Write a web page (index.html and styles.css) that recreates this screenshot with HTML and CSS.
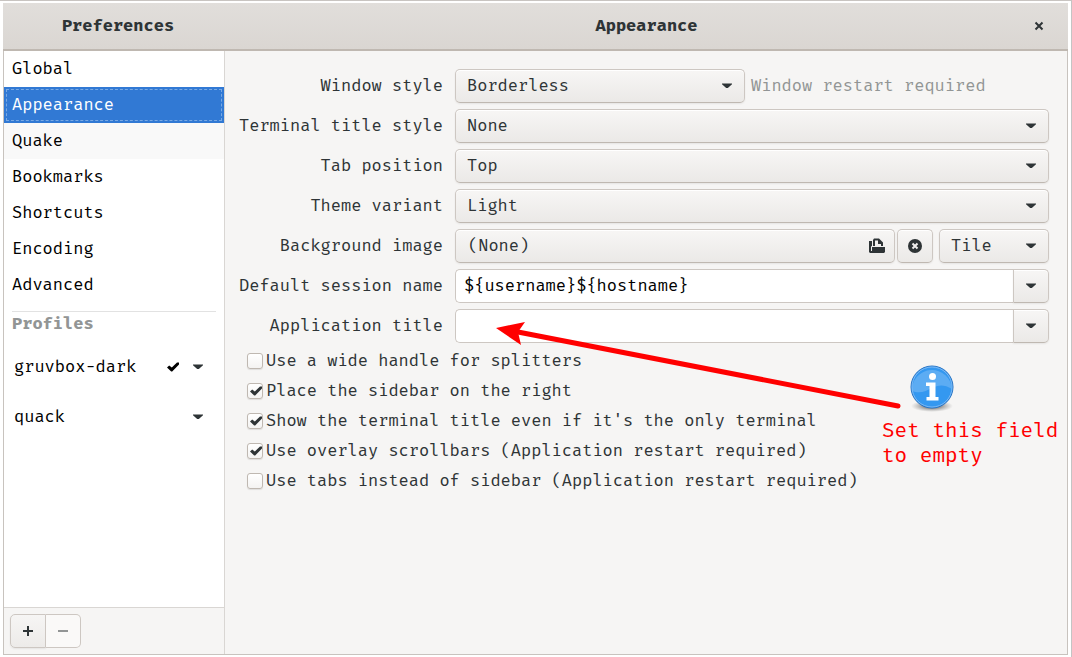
FILE: index.html
```html
<!DOCTYPE html>
<html lang="en">
<head>
<meta charset="utf-8">
<title>Preferences</title>
<link rel="stylesheet" href="styles.css">
</head>
<body>
<svg class="symbols" aria-hidden="true">
  <symbol id="caret" viewBox="0 0 10 6"><path d="M0 0.5H10V1.2L5.8 5H4.2L0 1.2Z"/></symbol>
  <symbol id="tick" viewBox="0 0 12 10"><path d="M0 5.500L2.200 3.500L4.800 5.600L10 0.500H12V2.500L5.200 9.500H4.200Z"/></symbol>
</svg>
<div class="window">
  <header class="titlebar">
    <h1 class="title title-side">Preferences</h1>
    <h2 class="title title-main">Appearance</h2>
    <button class="close" aria-label="Close"><svg width="10" height="10" viewBox="0 0 10 10"><path d="M1.500 1.500L8.500 8.500M8.500 1.500L1.500 8.500"/></svg></button>
  </header>
  <div class="body">
    <aside class="sidebar">
      <nav class="pages">
        <a class="page" href="#">Global</a>
        <a class="page selected" href="#" aria-current="page">Appearance</a>
        <a class="page hovered" href="#">Quake</a>
        <a class="page" href="#">Bookmarks</a>
        <a class="page" href="#">Shortcuts</a>
        <a class="page" href="#">Encoding</a>
        <a class="page" href="#">Advanced</a>
      </nav>
      <section class="profiles">
        <h3 class="profiles-title">Profiles</h3>
        <div class="profile"><span class="profile-name">gruvbox-dark</span><svg class="tick" width="12" height="10"><use href="#tick"/></svg><button class="profile-menu" aria-label="gruvbox-dark menu"><svg class="caret"><use href="#caret"/></svg></button></div>
        <div class="profile"><span class="profile-name">quack</span><button class="profile-menu" aria-label="quack menu"><svg class="caret"><use href="#caret"/></svg></button></div>
      </section>
      <footer class="actions">
        <button class="action" aria-label="Add profile"><svg width="10" height="10" viewBox="0 0 10 10"><path d="M0 5H10M5 0V10"/></svg></button>
        <button class="action" aria-label="Remove profile" disabled><svg width="10" height="10" viewBox="0 0 10 10"><path d="M0 5H10"/></svg></button>
      </footer>
    </aside>
    <main class="panel">
      <form class="form">
        <label class="label" for="style">Window style</label>
        <div class="field">
          <span class="combo combo-style"><select class="control" id="style"><option>Borderless</option></select><svg class="caret"><use href="#caret"/></svg></span>
          <span class="note">Window restart required</span>
        </div>
        <label class="label" for="title-style">Terminal title style</label>
        <div class="field"><span class="combo"><select class="control" id="title-style"><option>None</option></select><svg class="caret"><use href="#caret"/></svg></span></div>
        <label class="label" for="tabs">Tab position</label>
        <div class="field"><span class="combo"><select class="control" id="tabs"><option>Top</option></select><svg class="caret"><use href="#caret"/></svg></span></div>
        <label class="label" for="theme">Theme variant</label>
        <div class="field"><span class="combo"><select class="control" id="theme"><option>Light</option></select><svg class="caret"><use href="#caret"/></svg></span></div>
        <label class="label" for="image">Background image</label>
        <div class="field">
          <button type="button" class="control file" id="image"><span>(None)</span><svg width="16" height="16" viewBox="0 0 16 16"><path class="ink" d="M0 3H3V9H16V14L15 15H1L0 14Z"/><path class="ink" fill-rule="evenodd" d="M4 2L5 0.500H10L14 4.500V9H4ZM6 2.500V8H12V6H9V2.500Z"/><path class="gap" d="M2.500 13V8.500H16"/></svg></button>
          <button type="button" class="control clear" aria-label="Clear image"><svg width="14" height="14" viewBox="0 0 14 14"><circle class="ink" cx="7" cy="7" r="7"/><path class="cross" d="M4.5 4.5L9.5 9.5M9.5 4.5L4.5 9.5"/></svg></button>
          <span class="combo combo-tile"><select class="control" aria-label="Image placement"><option>Tile</option></select><svg class="caret"><use href="#caret"/></svg></span>
        </div>
        <label class="label" for="session">Default session name</label>
        <div class="field entry"><input class="text" id="session" type="text" value="${username}${hostname}"><button type="button" class="control drop" aria-label="Session variables"><svg class="caret"><use href="#caret"/></svg></button></div>
        <label class="label" for="app-title">Application title</label>
        <div class="field entry"><input class="text" id="app-title" type="text" value=""><button type="button" class="control drop" aria-label="Title variables"><svg class="caret"><use href="#caret"/></svg></button></div>
      </form>
      <div class="checks">
        <label class="check"><span class="box"><input type="checkbox"><svg class="mark" width="12" height="10"><use href="#tick"/></svg></span>Use a wide handle for splitters</label>
        <label class="check"><span class="box"><input type="checkbox" checked><svg class="mark" width="12" height="10"><use href="#tick"/></svg></span>Place the sidebar on the right</label>
        <label class="check"><span class="box"><input type="checkbox" checked><svg class="mark" width="12" height="10"><use href="#tick"/></svg></span>Show the terminal title even if it's the only terminal</label>
        <label class="check"><span class="box"><input type="checkbox" checked><svg class="mark" width="12" height="10"><use href="#tick"/></svg></span>Use overlay scrollbars (Application restart required)</label>
        <label class="check"><span class="box"><input type="checkbox"><svg class="mark" width="12" height="10"><use href="#tick"/></svg></span>Use tabs instead of sidebar (Application restart required)</label>
      </div>
    </main>
  </div>
</div>
<svg class="arrow" width="408" height="92" viewBox="0 0 408 92" aria-hidden="true"><path class="shaft" d="M22 13L402 87"/><path class="head" d="M0 9L29 3L22 13L25 26Z"/></svg>
<aside class="callout">
  <svg class="info" width="44" height="50" viewBox="0 0 44 50" aria-hidden="true">
    <defs><radialGradient id="shade"><stop offset="0.4" stop-color="#777" stop-opacity="0.8"/><stop offset="1" stop-color="#999" stop-opacity="0"/></radialGradient></defs>
    <ellipse cx="22" cy="42" rx="21" ry="6" fill="url(#shade)"/>
    <circle cx="22" cy="23" r="21" fill="#3498f0" stroke="#2873c2"/>
    <path d="M2 27A20 20 0 1 1 42 25C34 20 28 21 22 24S10 30 2 27Z" fill="#5cacf3"/>
    <circle cx="22" cy="23" r="20" fill="none" stroke="#7ab8f5"/>
    <circle cx="22.500" cy="12.500" r="3.500" fill="#fff"/>
    <path d="M16 18.500H25.500V33H28.500V36.500H16.500V33H19.500V22H16Z" fill="#fff"/>
  </svg>
  <p class="callout-text">Set this field<br>to empty</p>
</aside>
</body>
</html>
```
FILE: styles.css
```css
* { box-sizing: border-box; }
body {
  margin: 0;
  min-height: 100vh;
  padding: 2px 3px 2px;
  display: flex;
  position: relative;
  background: #fff;
  border-top: 1px solid #c8c4c1;
  border-right: 1px solid #c4c4c4;
  color: #2e3436;
  font: 17px/24px "Fira Mono", "Liberation Mono", monospace;
}
button, select, input { font: inherit; color: inherit; margin: 0; }
button { display: flex; align-items: center; justify-content: center; padding: 0; }
.symbols { position: absolute; width: 0; height: 0; }
.window { flex: 1; display: flex; flex-direction: column; min-width: 0; }
.titlebar {
  display: flex;
  align-items: center;
  height: 48px;
  padding-bottom: 1px;
  background: linear-gradient(#e1dedb, #dad6d2);
  border-bottom: 2px solid #bfb8b1;
}
.title { margin: 0; font-size: 17px; text-align: center; }
.title-side { width: 230px; }
.title-main { flex: 1; padding-left: 50px; }
.close { width: 58px; height: 34px; border: 0; background: none; }
.close path { stroke: #2e3436; stroke-width: 2; }
.body { flex: 1; display: flex; border: 1px solid #c8c3be; border-top: 0; }
.sidebar {
  width: 221px;
  display: flex;
  flex-direction: column;
  background: #fff;
  border-right: 1px solid #d9d6d3;
  color: #000;
}
.pages { display: flex; flex-direction: column; }
.page { height: 36px; padding: 6px 8px; color: #000; text-decoration: none; }
.selected { background: #3179d4; color: #fff; outline: 1px dashed #79a9e4; outline-offset: -3px; }
.hovered { background: #f9f9f9; }
.profiles { flex: 1; padding: 8px 8px 0; }
.profiles-title {
  margin: 0 0 6px;
  border-top: 1px solid #e2e2e2;
  font-size: 17px;
  color: #929595;
}
.profile { display: flex; align-items: center; height: 50px; padding: 0 1px 0 2px; }
.profile-name { flex: 1; }
.profile-menu { width: 34px; height: 34px; border: 0; background: none; }
.tick { margin-right: 2px; }
.caret { width: 10px; height: 6px; fill: #2e3436; }
.actions { display: flex; height: 47px; padding: 6px; background: #f6f5f4; border-top: 1px solid #d9d6d3; }
.action {
  width: 36px;
  height: 34px;
  border: 1px solid #cdc7c2;
  border-radius: 5px 0 0 5px;
  background: linear-gradient(#f6f5f4, #edebe9);
  box-shadow: 0 1px 2px #00000012;
}
.action + .action { width: 35px; border-left: 0; border-radius: 0 5px 5px 0; background: #faf9f8; box-shadow: none; }
.action path { stroke: #2e3436; stroke-width: 2; }
.action:disabled path { stroke: #929595; }
.panel { flex: 1; min-width: 0; padding: 18px 18px 18px 12px; background: #f6f5f4; }
.form { display: grid; grid-template-columns: 206px minmax(0, 1fr); gap: 6px 12px; }
.label { height: 34px; padding-top: 5px; text-align: right; white-space: nowrap; }
.field { display: flex; gap: 6px; height: 34px; min-width: 0; }
.control {
  height: 34px;
  border: 1px solid #cdc7c2;
  border-bottom-color: #bfb8b1;
  border-radius: 5px;
  background: linear-gradient(#f7f6f5, #ebe9e7);
  box-shadow: inset 0 1px #fff, 0 1px 2px #00000012;
}
.combo { flex: 1; display: grid; align-items: center; }
.combo > * { grid-area: 1 / 1; }
.combo .caret { justify-self: end; margin-right: 13px; pointer-events: none; }
.combo select { appearance: none; width: 100%; padding: 0 32px 0 11px; }
.combo-style { flex: 0 1 290px; }
.combo-tile { flex: 0 0 110px; }
.note { padding-top: 5px; color: #929595; white-space: nowrap; }
.file { flex: 1; justify-content: space-between; padding: 0 9px 0 12px; }
.clear { width: 36px; margin-left: -4px; }
.ink { fill: #2e3436; }
.gap { fill: none; stroke: #f0efee; }
.cross { stroke: #f0efee; stroke-width: 2; }
.entry { gap: 0; }
.text {
  flex: 1;
  min-width: 0;
  padding: 0 8px;
  border: 1px solid #cdc7c2;
  border-right: 0;
  border-radius: 5px 0 0 5px;
  background: #fff;
  color: #000;
}
.drop { width: 36px; border-radius: 0 5px 5px 0; }
.checks { padding: 3px 0 0 10px; }
.check { display: flex; align-items: center; gap: 3px; height: 30px; white-space: nowrap; }
.box { display: grid; place-items: center; }
.box > * { grid-area: 1 / 1; }
.box input {
  appearance: none;
  width: 16px;
  height: 16px;
  margin: 0;
  border: 1px solid #bfb8b1;
  border-radius: 3px;
  background: linear-gradient(#fff, #f4f3f2);
  box-shadow: 0 1px 1px #00000018;
}
.mark { visibility: hidden; margin-left: 2px; fill: #2e3436; pointer-events: none; }
.box input:checked + .mark { visibility: visible; }
.arrow { position: absolute; left: 496px; top: 318px; pointer-events: none; }
.shaft { stroke: #f00; stroke-width: 5; stroke-linecap: round; }
.head { fill: #f00; }
.callout { position: absolute; left: 882px; top: 363px; color: #f00; }
.info { display: block; margin-left: 28px; }
.callout-text { margin: 4px 0 0; font-size: 21px; line-height: 25px; white-space: nowrap; }
```
